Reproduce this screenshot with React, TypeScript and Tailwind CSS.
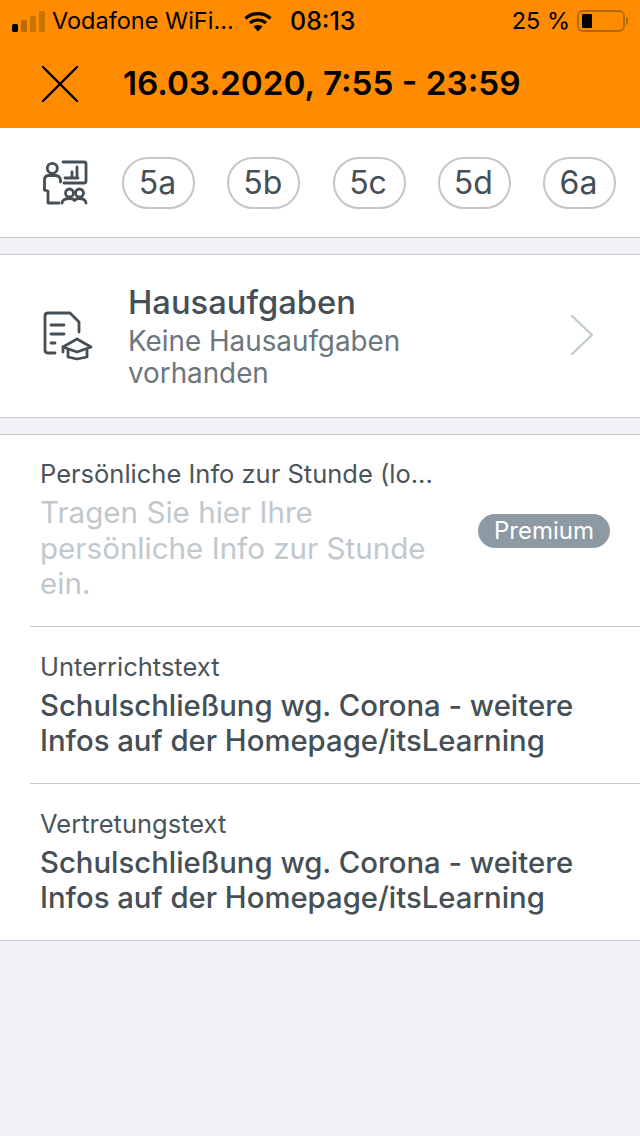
const classes = ['5a', '5b', '5c', '5d', '6a']

function SignalBars() {
  return (
    <svg width="34" height="21" viewBox="0 0 34 21" className="shrink-0">
      <rect x="0" y="13" width="6" height="8" rx="1.5" fill="#000" />
      <rect x="9" y="9" width="6" height="12" rx="1.5" fill="#b86a05" />
      <rect x="18" y="5" width="6" height="16" rx="1.5" fill="#c87403" />
      <rect x="27" y="0" width="6" height="21" rx="1.5" fill="#c87403" />
    </svg>
  )
}

function Wifi() {
  return (
    <svg width="28" height="21" viewBox="0 0 28 21" fill="none" className="shrink-0">
      <path d="M1.5 7.5C8.5 1 19.5 1 26.5 7.5" stroke="#000" strokeWidth="3.2" />
      <path d="M6 12C10.5 8 17.5 8 22 12" stroke="#000" strokeWidth="3.2" />
      <path d="M14 20.5L9.5 15.6C12 13.6 16 13.6 18.5 15.6Z" fill="#000" />
    </svg>
  )
}

function Battery() {
  return (
    <div className="flex items-center">
      <div className="flex h-[22px] w-[48px] items-center rounded-[6px] border-2 border-[#b3690c] pl-[3px]">
        <div className="h-[14px] w-[10px] rounded-[1px] bg-black" />
      </div>
      <div className="ml-[1px] h-[8px] w-[2px] rounded-r-sm bg-[#b3690c]" />
    </div>
  )
}

function CloseIcon() {
  return (
    <svg width="38" height="38" viewBox="0 0 38 38" fill="none" stroke="#000" strokeWidth="2.4" strokeLinecap="round" className="shrink-0">
      <path d="M2 2L36 36M36 2L2 36" />
    </svg>
  )
}

function TeacherIcon() {
  return (
    <svg width="50" height="50" viewBox="40 158 50 50" fill="none" stroke="#454f55" strokeWidth="2.8" strokeLinecap="round" strokeLinejoin="round" className="shrink-0">
      <circle cx="52.3" cy="168.3" r="5" />
      <path d="M44.5 190V180C44.5 177 46 175.5 49 175.5H55C58 175.5 60 177 60.5 180V182" />
      <path d="M44.5 190L48 191V203H59" />
      <path d="M63 162H84C85.2 162 86 162.8 86 164V181C86 182.2 85.2 183 84 183H64" />
      <path d="M65 178H78M72 178V172M77 178V167" />
      <circle cx="69.5" cy="193" r="4" />
      <circle cx="79.5" cy="193" r="4" />
      <path d="M62 203C62.5 200 65.5 198.5 69.5 198.5C71.5 198.5 73.5 199 74.5 200.5C75.5 199 77.5 198.5 79.5 198.5C83.5 198.5 85.5 200 86 203" />
    </svg>
  )
}

function HomeworkIcon() {
  return (
    <svg width="56" height="56" viewBox="40 308 56 56" fill="none" stroke="#454f55" strokeWidth="2.8" strokeLinecap="round" strokeLinejoin="round" className="shrink-0">
      <path d="M55 353H48C46 353 45 352 45 350V316C45 314 46 313 48 313H70L79 322V332" />
      <path d="M51 325H64M51 334H64M51 343H55" />
      <path d="M63 347L77 339L91 347L77 352Z" />
      <path d="M63 347V352" />
      <path d="M68 350V357L77 359L87 357V350" />
    </svg>
  )
}

function ChevronIcon() {
  return (
    <svg width="24" height="42" viewBox="0 0 24 42" fill="none" stroke="#c0ccd4" strokeWidth="2.4" strokeLinecap="round" strokeLinejoin="round" className="mb-[2px] shrink-0">
      <path d="M2 2L22 21L2 40" />
    </svg>
  )
}

function InfoRow({ label, text }: { label: string; text: string }) {
  return (
    <div className="pb-[25px] pt-[26px]">
      <p className="text-[25.5px] leading-[28px] text-[#4a545b]">{label}</p>
      <p className="mt-[7px] text-[29.3px] font-medium leading-[35px] text-[#454f55]">{text}</p>
    </div>
  )
}

export default function App() {
  return (
    <div className="flex min-h-[1136px] flex-col bg-[#f1f1f7] font-['Inter',sans-serif]">
      <header className="h-[128px] bg-[#ff8c00] text-black">
        <div className="flex h-[42px] items-center pl-[12px] pr-[12px]">
          <SignalBars />
          <span className="ml-[6px] w-[192px] shrink-0 whitespace-nowrap text-[23.5px] leading-none">Vodafone WiFi...</span>
          <Wifi />
          <span className="ml-[18px] text-[25px] font-medium leading-none">08:13</span>
          <span className="ml-auto text-[23.5px] leading-none">25 %</span>
          <div className="ml-[7px]">
            <Battery />
          </div>
        </div>
        <div className="flex h-[86px] items-center pb-[2px] pl-[41px]">
          <CloseIcon />
          <h1 className="ml-[44px] whitespace-nowrap text-[33.3px] font-semibold leading-none">16.03.2020, 7:55 - 23:59</h1>
        </div>
      </header>

      <section className="flex h-[110px] items-center border-b border-[#c8c8cc] bg-white pl-[40px] pr-[24px]">
        <TeacherIcon />
        <div className="ml-[32px] flex flex-1 justify-between">
          {classes.map((c) => (
            <span
              key={c}
              className="flex h-[52px] w-[73px] items-center justify-center rounded-full border-2 border-[#c0c8cd] pr-[2px] text-[32px] leading-none text-[#454f55]"
            >
              {c}
            </span>
          ))}
        </div>
      </section>

      <section className="mt-[16px] flex h-[164px] items-center border-y border-[#c8c8cc] bg-white pl-[40px] pr-[46px]">
        <HomeworkIcon />
        <div className="ml-[32px] flex-1 pt-[1px]">
          <h2 className="text-[32.7px] font-medium leading-[36px] text-[#454f55]">Hausaufgaben</h2>
          <p className="mt-[5px] w-[340px] text-[27.8px] font-normal leading-[32px] text-[#6b767d]">Keine Hausaufgaben vorhanden</p>
        </div>
        <ChevronIcon />
      </section>

      <section className="mt-[16px] border-y border-[#c8c8cc] bg-white">
        <div className="flex items-center pb-[24px] pl-[40px] pr-[30px] pt-[25px]">
          <div className="w-[438px]">
            <p className="whitespace-nowrap text-[25.5px] leading-[28px] text-[#4a545b]">Persönliche Info zur Stunde (lo...</p>
            <p className="mt-[7px] w-[400px] text-[29.6px] leading-[35.5px] text-[#c0c8cd]">
              Tragen Sie hier Ihre persönliche Info zur Stunde ein.
            </p>
          </div>
          <span className="ml-auto flex h-[34px] w-[132px] items-center justify-center rounded-full bg-[#8e9aa3] text-[24px] leading-none text-white">
            Premium
          </span>
        </div>
        <div className="ml-[30px] border-t border-[#c8c8cc] pl-[10px] pr-[30px]">
          <InfoRow label="Unterrichtstext" text="Schulschließung wg. Corona - weitere Infos auf der Homepage/itsLearning" />
        </div>
        <div className="ml-[30px] border-t border-[#c8c8cc] pl-[10px] pr-[30px]">
          <InfoRow label="Vertretungstext" text="Schulschließung wg. Corona - weitere Infos auf der Homepage/itsLearning" />
        </div>
      </section>
    </div>
  )
}
